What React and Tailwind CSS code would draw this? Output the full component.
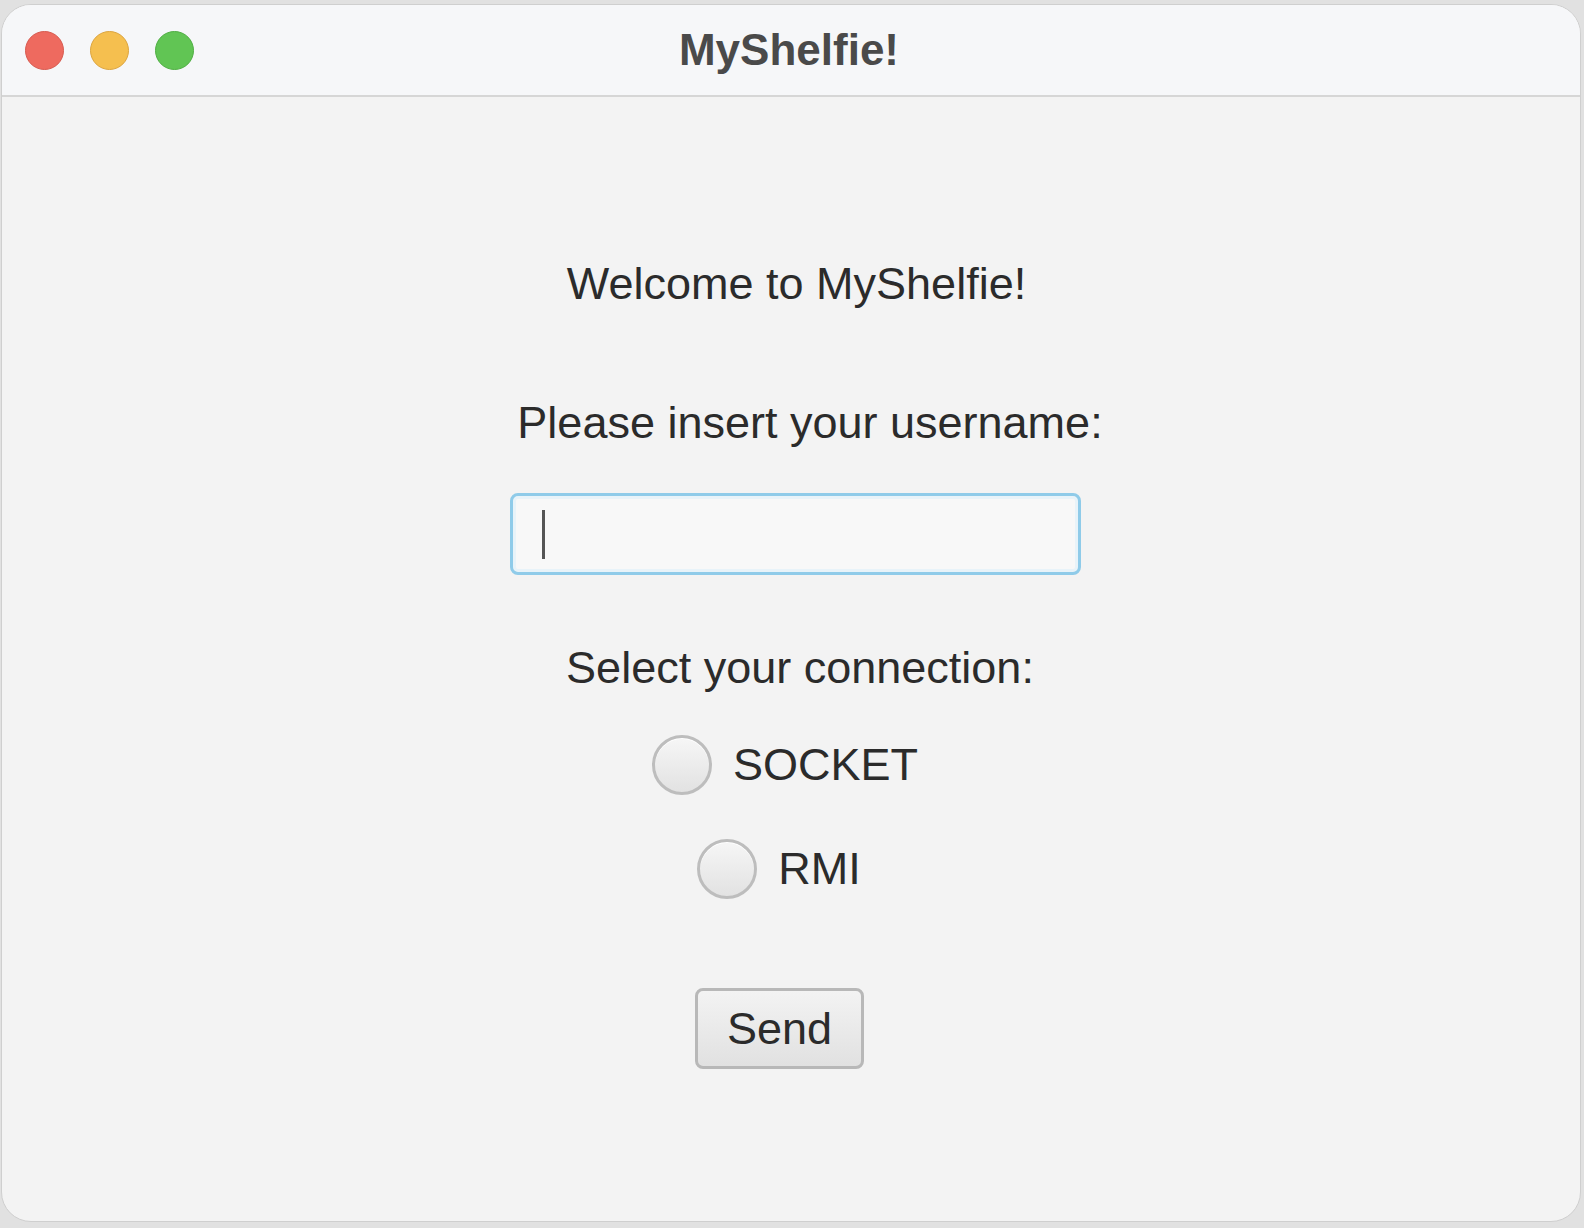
import React from 'react'

const FONT = { fontFamily: '"Liberation Sans", Arial, sans-serif' }

function TrafficLights() {
  return (
    <div className="flex items-center gap-[26px] pl-[23px]">
      <span className="block w-[39px] h-[39px] rounded-full bg-[#ee6a5f] border border-[#d65a4f]" />
      <span className="block w-[39px] h-[39px] rounded-full bg-[#f5bf4f] border border-[#dba43f]" />
      <span className="block w-[39px] h-[39px] rounded-full bg-[#61c554] border border-[#4fae43]" />
    </div>
  )
}

function Radio({ label }) {
  return (
    <label className="flex items-center gap-[21px] h-[60px] cursor-pointer">
      <span className="block w-[60px] h-[60px] rounded-full border-[3px] border-[#bdbdbd] bg-gradient-to-b from-[#f6f6f6] to-[#e2e2e2] shadow-[inset_0_1px_0_#ffffff]" />
      <span className="text-[45px] leading-[52px] text-[#2b2b2b]">{label}</span>
    </label>
  )
}

export default function App() {
  return (
    <div className="w-[1584px] h-[1228px] bg-[#e1e1e1] pt-[4px] pl-[1px] pr-[3px] pb-[6px]" style={FONT}>
      <div className="w-full h-full rounded-[30px] overflow-hidden bg-[#f3f3f3] border border-[#cfcfcf] flex flex-col">
        {/* title bar */}
        <div className="relative h-[92px] shrink-0 bg-[#f6f7f9] border-b-2 border-[#d6d6d6] flex items-center">
          <TrafficLights />
          <div className="absolute inset-0 flex items-center justify-center pointer-events-none">
            <span className="text-[44px] leading-none font-bold text-[#4a4a4a] mr-[4px]">MyShelfie!</span>
          </div>
        </div>

        {/* body */}
        <div className="flex flex-col items-center pt-[161px]">
          <div className="text-[45px] leading-[52px] text-[#2b2b2b] ml-[11px]">Welcome to MyShelfie!</div>

          <div className="mt-[87px] text-[45px] leading-[52px] text-[#2b2b2b] ml-[38px]">
            Please insert your username:
          </div>

          <div className="mt-[44px] ml-[9px] w-[571px] h-[82px] rounded-[8px] border-[3px] border-[#8fcbe9] bg-[#f8f8f8] shadow-[inset_0_0_0_3px_#e8f3f9] flex items-center pl-[29px]">
            <span className="block w-[3px] h-[49px] bg-[#555555]" />
          </div>

          <div className="mt-[67px] text-[45px] leading-[52px] text-[#2b2b2b] ml-[18px]">
            Select your connection:
          </div>

          <div className="mt-[41px] mr-[12px]">
            <Radio label="SOCKET" />
          </div>
          <div className="mt-[44px] mr-[24px]">
            <Radio label="RMI" />
          </div>

          <button className="mt-[89px] mr-[23px] w-[169px] h-[81px] rounded-[8px] border-[3px] border-[#b8b8b8] bg-gradient-to-b from-[#f3f3f3] to-[#e1e1e1] text-[45px] leading-none text-[#2b2b2b] flex items-center justify-center">
            Send
          </button>
        </div>
      </div>
    </div>
  )
}
